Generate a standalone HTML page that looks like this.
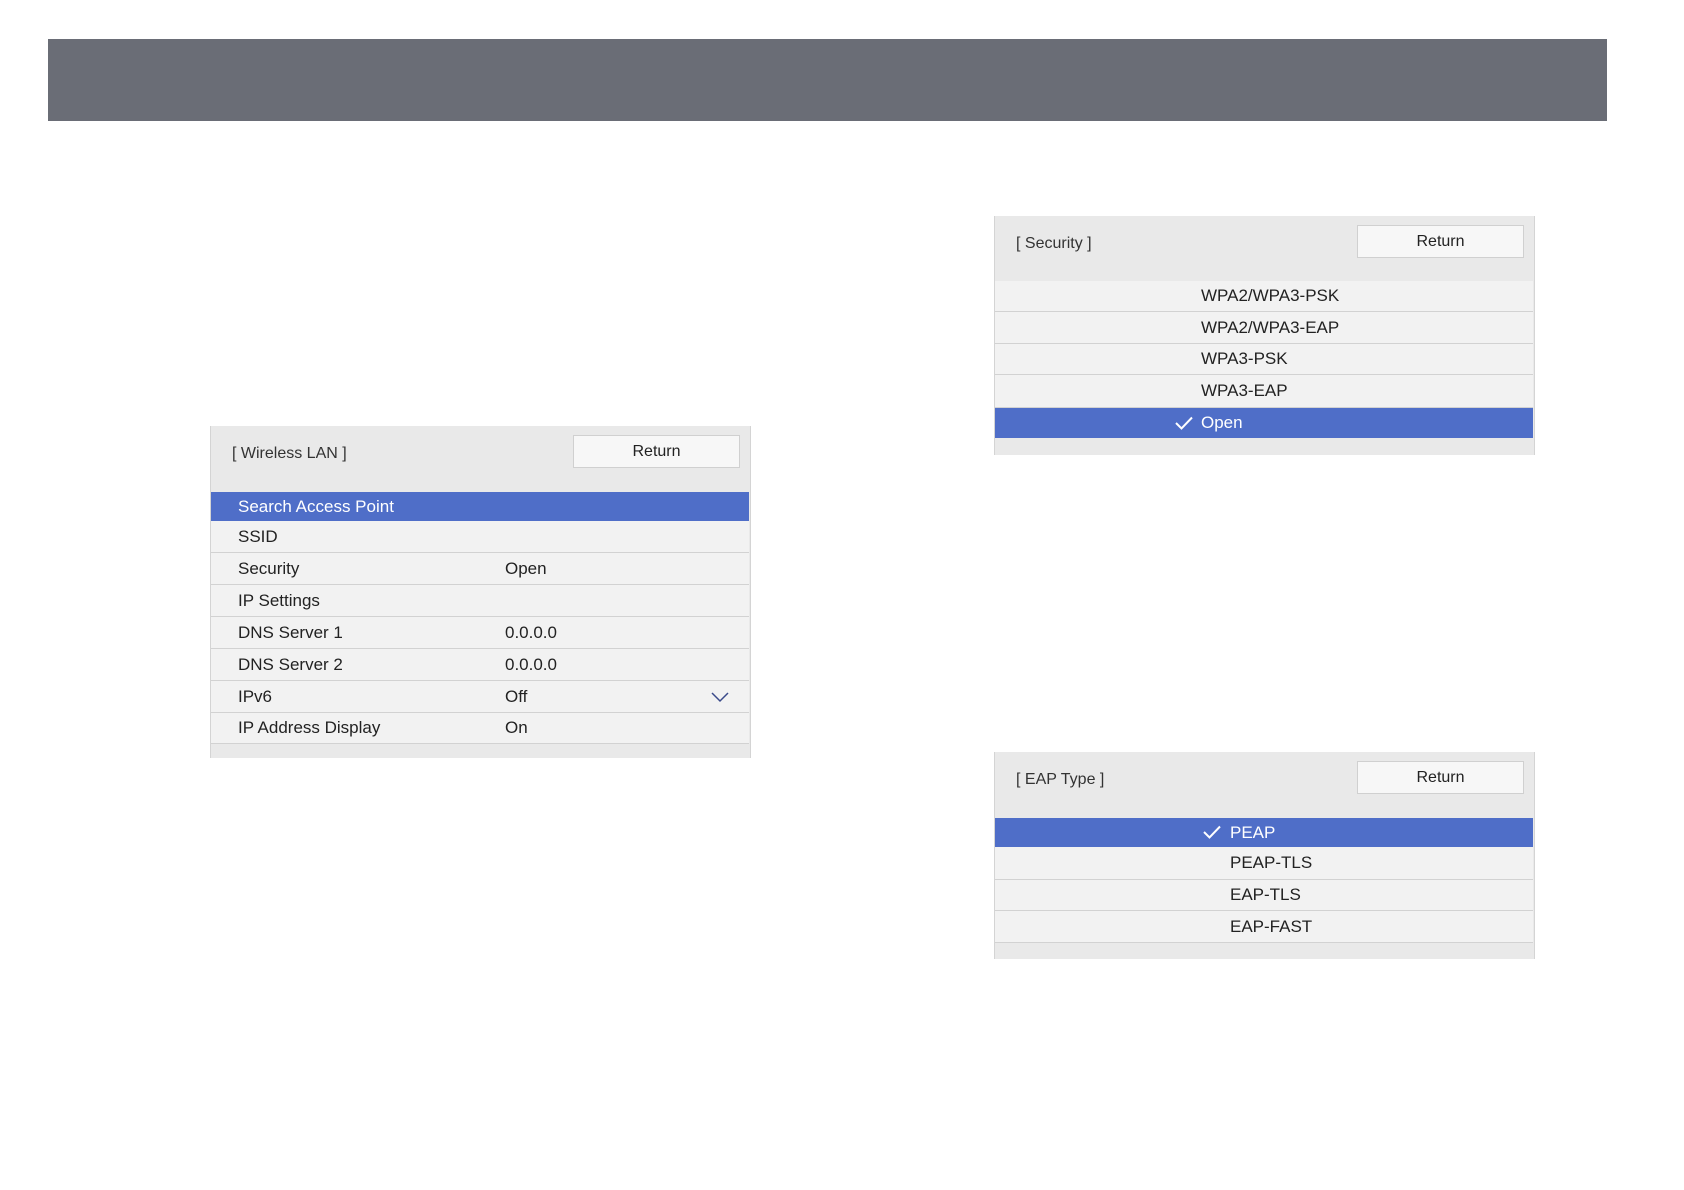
<!DOCTYPE html>
<html><head><meta charset="utf-8"><style>
body{margin:0;width:1684px;height:1190px;background:#fff;position:relative;overflow:hidden;font-family:"Liberation Sans",sans-serif;color:#222}
.bar{position:absolute;left:48px;top:39px;width:1559px;height:82px;background:#6a6d76}
.p{position:absolute;background:#e9e9e9;border-left:1px solid #d4d4d4;border-right:1px solid #d4d4d4}
.t{position:absolute;font-size:16px;color:#333}
.r{position:absolute;background:#f7f7f7;border:1px solid #d0d0d0;font-size:16px;text-align:center;box-sizing:border-box;line-height:31px;color:#222}
.row{position:absolute;left:0;right:1px;background:#f2f2f2;border-bottom:1px solid #d2d2d2;box-sizing:border-box;font-size:17px}
.row span{position:absolute;top:50%;transform:translateY(-50%)}
.sel{background:#4f6ec8;color:#fff;border-bottom:none}
</style></head><body>
<div class="bar"></div>

<div class="p" style="left:210px;top:426px;width:539px;height:332px">
<div class="t" style="left:21px;top:19px">[ Wireless LAN ]</div>
<div class="r" style="left:362px;top:9px;width:167px;height:33px">Return</div>
<div class="row sel" style="top:66px;height:29px"><span style="left:27px">Search Access Point</span></div>
<div class="row" style="top:95px;height:32px"><span style="left:27px">SSID</span></div>
<div class="row" style="top:127px;height:32px"><span style="left:27px">Security</span><span style="left:294px">Open</span></div>
<div class="row" style="top:159px;height:32px"><span style="left:27px">IP Settings</span></div>
<div class="row" style="top:191px;height:32px"><span style="left:27px">DNS Server 1</span><span style="left:294px">0.0.0.0</span></div>
<div class="row" style="top:223px;height:32px"><span style="left:27px">DNS Server 2</span><span style="left:294px">0.0.0.0</span></div>
<div class="row" style="top:255px;height:32px"><span style="left:27px">IPv6</span><span style="left:294px">Off</span>
<svg style="position:absolute;left:500px;top:11px" width="18" height="11"><path d="M1 1 L9 9 L17 1" stroke="#3a4a8a" stroke-width="1.5" fill="none"/></svg></div>
<div class="row" style="top:287px;height:31px"><span style="left:27px">IP Address Display</span><span style="left:294px">On</span></div>
</div>

<div class="p" style="left:994px;top:216px;width:539px;height:239px">
<div class="t" style="left:21px;top:19px">[ Security ]</div>
<div class="r" style="left:362px;top:9px;width:167px;height:33px">Return</div>
<div class="row" style="top:65px;height:31px"><span style="left:206px">WPA2/WPA3-PSK</span></div>
<div class="row" style="top:96px;height:32px"><span style="left:206px">WPA2/WPA3-EAP</span></div>
<div class="row" style="top:128px;height:31px"><span style="left:206px">WPA3-PSK</span></div>
<div class="row" style="top:159px;height:33px"><span style="left:206px">WPA3-EAP</span></div>
<div class="row sel" style="top:192px;height:30px"><svg style="position:absolute;left:180px;top:8px" width="18" height="14"><path d="M1 7 L6.5 12.5 L17 1.5" stroke="#fff" stroke-width="2" fill="none"/></svg><span style="left:206px">Open</span></div>
</div>

<div class="p" style="left:994px;top:752px;width:539px;height:207px">
<div class="t" style="left:21px;top:19px">[ EAP Type ]</div>
<div class="r" style="left:362px;top:9px;width:167px;height:33px">Return</div>
<div class="row sel" style="top:66px;height:29px"><svg style="position:absolute;left:208px;top:7px" width="18" height="14"><path d="M1 7 L6.5 12.5 L17 1.5" stroke="#fff" stroke-width="2" fill="none"/></svg><span style="left:235px">PEAP</span></div>
<div class="row" style="top:95px;height:33px"><span style="left:235px">PEAP-TLS</span></div>
<div class="row" style="top:128px;height:31px"><span style="left:235px">EAP-TLS</span></div>
<div class="row" style="top:159px;height:32px"><span style="left:235px">EAP-FAST</span></div>
</div>
</body></html>
